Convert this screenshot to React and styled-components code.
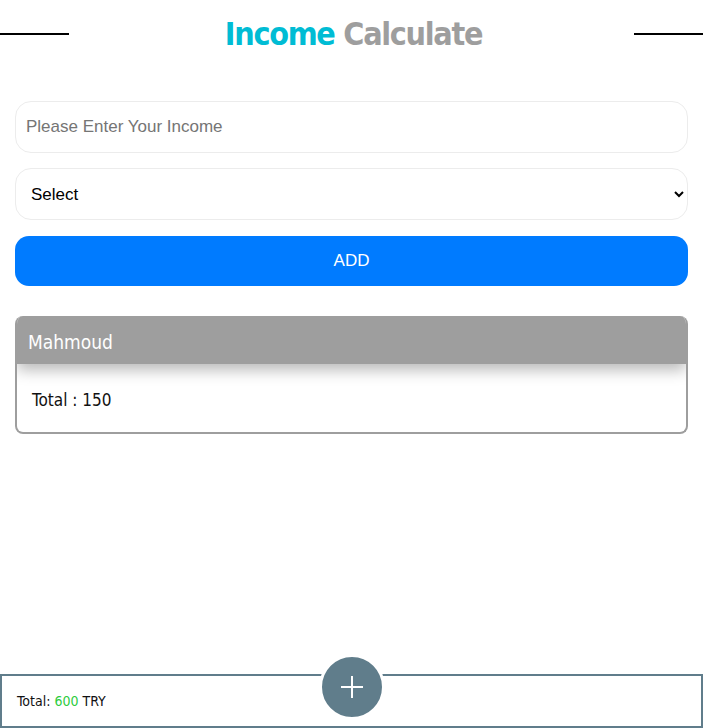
import React from "react";
import styled, { createGlobalStyle } from "styled-components";

const Global = createGlobalStyle`
  * { box-sizing: border-box; }
  html, body { margin: 0; padding: 0; background: #fff; }
  body { font-family: "Liberation Sans Narrow", "DejaVu Sans Condensed", Roboto, sans-serif; }
`;

const Page = styled.div`
  min-height: 100vh;
  display: flex;
  flex-direction: column;
`;

const Header = styled.header`
  height: 68px;
  display: flex;
  align-items: center;
  justify-content: space-between;
`;

const Rule = styled.span`
  width: 69px;
  height: 2px;
  background: #000;
`;

const Title = styled.h1`
  margin: 0 0 0 4px;
  font-size: 32px;
  font-weight: 700;
  line-height: 1;
  color: #9e9e9e;
  letter-spacing: -1.3px;
`;

const Accent = styled.span`
  color: #00bcd4;
`;

const Form = styled.form`
  display: flex;
  flex-direction: column;
  padding: 33px 15px 0;
`;

const Field = styled.input`
  height: 52px;
  border: 1px solid #ececec;
  border-radius: 16px;
  padding: 0 10px;
  font-family: "Liberation Sans", Arial, sans-serif;
  font-size: 17px;
  color: #000;
  outline: none;
  &::placeholder { color: #757575; }
`;

const Picker = styled.select`
  margin-top: 15px;
  height: 52px;
  border: 1px solid #ececec;
  border-radius: 16px;
  padding: 0 6px 0 11px;
  background: #fff;
  font-family: "Liberation Sans", Arial, sans-serif;
  font-size: 17px;
  color: #000;
  outline: none;
`;

const AddButton = styled.button`
  margin-top: 16px;
  height: 50px;
  border: none;
  border-radius: 14px;
  background: #007bff;
  color: #fff;
  font-family: "Liberation Sans", Arial, sans-serif;
  font-size: 17px;
`;

const List = styled.section`
  padding: 30px 15px 0;
`;

const Card = styled.article`
  border: 2px solid #9e9e9e;
  border-top: none;
  border-radius: 8px;
  overflow: hidden;
`;

const CardHead = styled.div`
  height: 48px;
  background: #9e9e9e;
  color: #fff;
  font-size: 19px;
  display: flex;
  align-items: center;
  padding: 3px 11px 0;
  box-shadow: 0 6px 14px rgba(0, 0, 0, 0.28);
  position: relative;
`;

const CardBody = styled.div`
  height: 68px;
  display: flex;
  align-items: center;
  padding: 4px 15px 0;
  font-size: 17px;
  color: #111;
`;

const Footer = styled.footer`
  margin-top: auto;
  height: 54px;
  border: 2px solid #607d8b;
  position: relative;
  display: flex;
  align-items: center;
  padding: 0 15px;
  font-size: 14px;
  color: #111;
`;

const Amount = styled.span`
  color: #2ecc40;
`;

const Fab = styled.button`
  position: absolute;
  left: 50%;
  top: -22px;
  transform: translateX(-50%);
  width: 66px;
  height: 66px;
  border-radius: 50%;
  border: 3px solid #fff;
  background: #607d8b;
  display: flex;
  align-items: center;
  justify-content: center;
  padding: 0;
`;

export default function App() {
  return (
    <Page>
      <Global />
      <Header>
        <Rule />
        <Title>
          <Accent>Income</Accent> Calculate
        </Title>
        <Rule />
      </Header>
      <Form onSubmit={(e) => e.preventDefault()}>
        <Field type="number" placeholder="Please Enter Your Income" />
        <Picker defaultValue="">
          <option value="">Select</option>
        </Picker>
        <AddButton type="submit">ADD</AddButton>
      </Form>
      <List>
        <Card>
          <CardHead>Mahmoud</CardHead>
          <CardBody>Total : 150</CardBody>
        </Card>
      </List>
      <Footer>
        <span>
          Total: <Amount>600</Amount> TRY
        </span>
        <Fab type="button" aria-label="add">
          <svg width="22" height="22" viewBox="0 0 22 22">
            <path d="M11 0v22M0 11h22" stroke="#fff" strokeWidth="2" fill="none" />
          </svg>
        </Fab>
      </Footer>
    </Page>
  );
}
